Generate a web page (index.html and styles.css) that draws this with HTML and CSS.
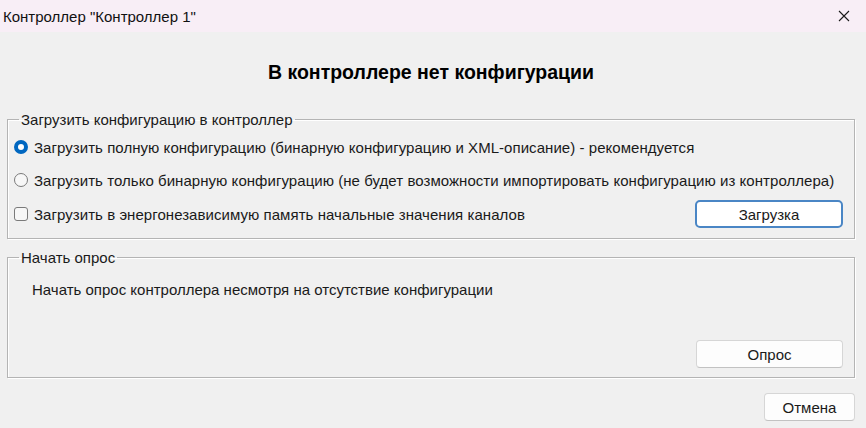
FILE: index.html
```html
<!DOCTYPE html>
<html lang="ru">
<head>
    <meta charset="UTF-8">
    <title>Контроллер "Контроллер 1"</title>
    <link rel="stylesheet" href="styles.css">
</head>
<body>
    <div class="titlebar">
        <span class="titlebar-text">Контроллер "Контроллер 1"</span>
        <svg class="close-icon" width="12" height="12" viewBox="0 0 12 12">
            <path d="M1 1 L11 11 M11 1 L1 11" stroke="#1a1a1a" stroke-width="1.1" fill="none"/>
        </svg>
    </div>
    <div class="dialog">
        <h1 class="heading">В контроллере нет конфигурации</h1>

        <fieldset class="group group-load">
            <legend>Загрузить конфигурацию в контроллер</legend>
            <label class="option">
                <input type="radio" name="mode" checked>
                <span>Загрузить полную конфигурацию (бинарную конфигурацию и XML-описание) - рекомендуется</span>
            </label>
            <label class="option">
                <input type="radio" name="mode">
                <span>Загрузить только бинарную конфигурацию (не будет возможности импортировать конфигурацию из контроллера)</span>
            </label>
            <div class="option-row">
                <label class="option">
                    <input type="checkbox">
                    <span>Загрузить в энергонезависимую память начальные значения каналов</span>
                </label>
                <button class="btn btn-default">Загрузка</button>
            </div>
        </fieldset>

        <fieldset class="group group-poll">
            <legend>Начать опрос</legend>
            <p class="poll-text">Начать опрос контроллера несмотря на отсутствие конфигурации</p>
            <div class="button-row">
                <button class="btn">Опрос</button>
            </div>
        </fieldset>

        <div class="footer">
            <button class="btn btn-cancel">Отмена</button>
        </div>
    </div>
</body>
</html>
```

FILE: styles.css
```css
body {
    margin: 0;
    background-color: #f0f0f0;
    font-family: "Liberation Sans", Arial, sans-serif;
    font-size: 15px;
    color: #1a1a1a;
}

.titlebar {
    height: 32px;
    display: flex;
    align-items: center;
    justify-content: space-between;
    padding: 0 16px 0 3px;
    background-color: #f8eef6;
}
.titlebar-text {
    font-size: 15px;
    color: #111;
}

.dialog {
    padding: 0 11px 0 7px;
}

.heading {
    margin: 29px 0 27px;
    text-align: center;
    font-size: 19.5px;
    font-weight: bold;
    color: #000;
}

.group {
    margin: 0;
    padding: 0 11px 0 6px;
    border: 1px solid #b4b4b4;
    box-shadow: inset 1px 1px 0 #fff, 1px 1px 0 #fff;
    display: flex;
    flex-direction: column;
    box-sizing: border-box;
}
.group legend {
    margin-left: 5px;
    padding: 0 2px;
    color: #1a1a1a;
}

.group-load {
    height: 128px;
    padding-top: 11px;
    gap: 17px;
}
.option-row {
    display: flex;
    justify-content: space-between;
    align-items: center;
    margin-top: -5px;
}
.option {
    display: flex;
    align-items: center;
    gap: 6px;
    height: 16px;
    letter-spacing: 0.05px;
}
.option input {
    margin: 0;
    appearance: none;
    width: 14px;
    height: 14px;
    box-sizing: border-box;
    border: 1px solid #7a7a7a;
    background-color: #f7f7f7;
}
.option input[type="radio"] {
    border-radius: 50%;
}
.option input[type="radio"]:checked {
    border: 4px solid #0067c0;
    background-color: #fff;
}
.option input[type="checkbox"] {
    border-radius: 3px;
}

.group-poll {
    margin-top: 10px;
    height: 129px;
}
.poll-text {
    margin: 15px 0 0 18px;
}
.button-row {
    display: flex;
    justify-content: flex-end;
    margin-top: 42px;
}

.btn {
    font-family: inherit;
    font-size: 15px;
    color: #1a1a1a;
    width: 147px;
    height: 28px;
    background-color: #fdfdfd;
    border: 1px solid #d6d6d6;
    border-bottom-color: #c2c2c2;
    border-radius: 4px;
}
.btn-default {
    background-color: #fff;
    border: 2px solid #4a86c5;
    border-radius: 5px;
    width: 148px;
}
.btn-cancel {
    width: 91px;
}

.footer {
    display: flex;
    justify-content: flex-end;
    margin-top: 15px;
}
```
